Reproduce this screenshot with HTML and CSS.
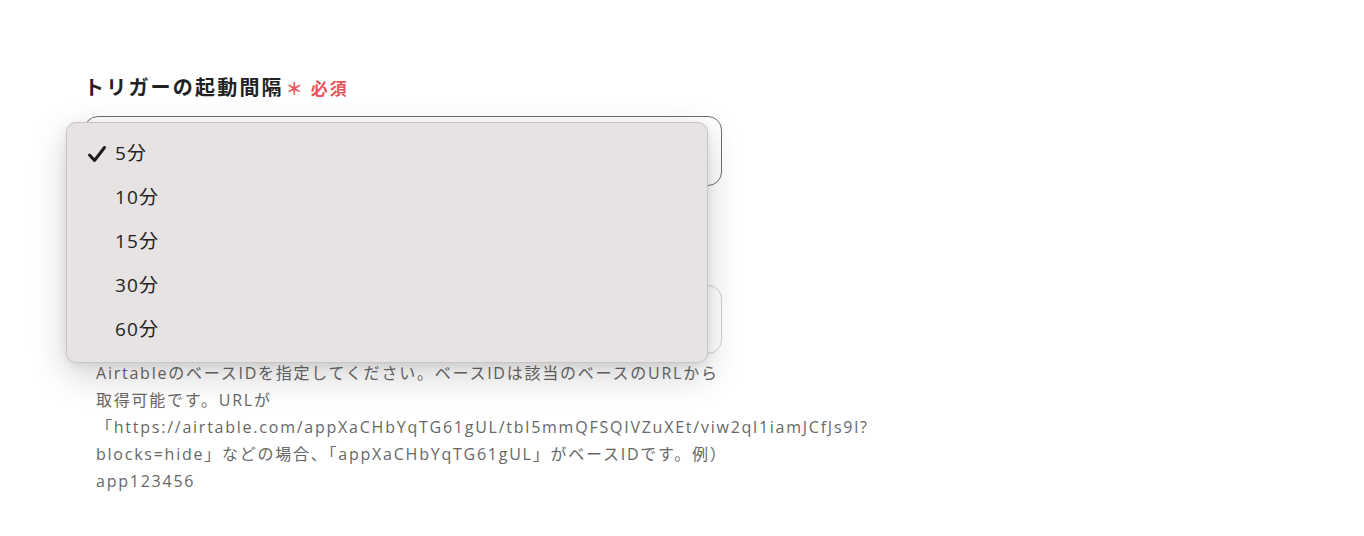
FILE: index.html
```html
<!DOCTYPE html>
<html lang="ja">
<head>
    <meta charset="UTF-8">
    <meta name="viewport" content="width=device-width, initial-scale=1.0">
    <title>トリガー設定</title>
    <link rel="stylesheet" href="styles.css">
</head>
<body>
    <div class="form">
        <div class="field">
            <div class="field-label">トリガーの起動間隔<span class="required">＊ 必須</span></div>
            <div class="select-wrap">
                <div class="select-box"></div>

                <!-- open popup menu -->
                <ul class="menu">
                    <li class="menu-item">
                        <svg class="check" width="20" height="18" viewBox="0 0 20 18">
                            <path d="M2.5 10 L7.5 15.5 L17.5 2.5" fill="none" stroke="#1c1c1c" stroke-width="3" stroke-linecap="round" stroke-linejoin="round"/>
                        </svg>
                        5分
                    </li>
                    <li class="menu-item">10分</li>
                    <li class="menu-item">15分</li>
                    <li class="menu-item">30分</li>
                    <li class="menu-item">60分</li>
                </ul>
            </div>
        </div>

        <div class="field field-second">
            <div class="input-box"></div>
            <p class="help">AirtableのベースIDを指定してください。ベースIDは該当のベースのURLから取得可能です。URLが「https://airtable.com/appXaCHbYqTG61gUL/tbl5mmQFSQIVZuXEt/viw2ql1iamJCfJs9l?blocks=hide」などの場合、「appXaCHbYqTG61gUL」がベースIDです。例）app123456</p>
        </div>
    </div>
</body>
</html>
```

FILE: styles.css
```css
body {
    margin: 0;
    background: #fff;
    font-family: "Open Sans", "Noto Sans CJK JP", sans-serif;
    color: #222;
}
.form {
    width: 638px;
    padding: 72px 0 0 84px;
}
.field-label {
    font-family: "Noto Sans CJK JP", sans-serif;
    font-size: 20px;
    font-weight: bold;
    line-height: 30px;
    letter-spacing: 0.11em;
    color: #222;
}
.required {
    margin-left: 2px;
    font-size: 17px;
    color: #e8545c;
    letter-spacing: 0.12em;
}
.select-wrap {
    position: relative;
    margin-top: 13px;
}
.select-box {
    height: 68px;
    border: 1px solid #6f6f6f;
    border-radius: 14px;
    background: #fff;
}
.field-second {
    margin-top: 99px;
}
.input-box {
    height: 67px;
    border: 1px solid #cfcfd4;
    border-radius: 14px;
    background: #fff;
}
.help {
    margin: 6px 0 0;
    padding: 0 0 0 12px;
    font-size: 16px;
    line-height: 27px;
    letter-spacing: 0.11em;
    color: #676767;
}
.menu {
    position: absolute;
    top: 6px;
    left: -18px;
    width: 640px;
    margin: 0;
    padding: 8px 0 11px;
    list-style: none;
    background: #e7e3e2;
    border: 1px solid #c9c5c5;
    border-radius: 10px;
    box-shadow: 0 12px 36px rgba(0, 0, 0, 0.18), 0 2px 8px rgba(0, 0, 0, 0.08);
}
.menu-item {
    position: relative;
    height: 44px;
    line-height: 44px;
    padding-left: 48px;
    font-size: 19px;
    letter-spacing: 0.06em;
    color: #222;
}
.check {
    position: absolute;
    left: 20px;
    top: 14px;
}
```
